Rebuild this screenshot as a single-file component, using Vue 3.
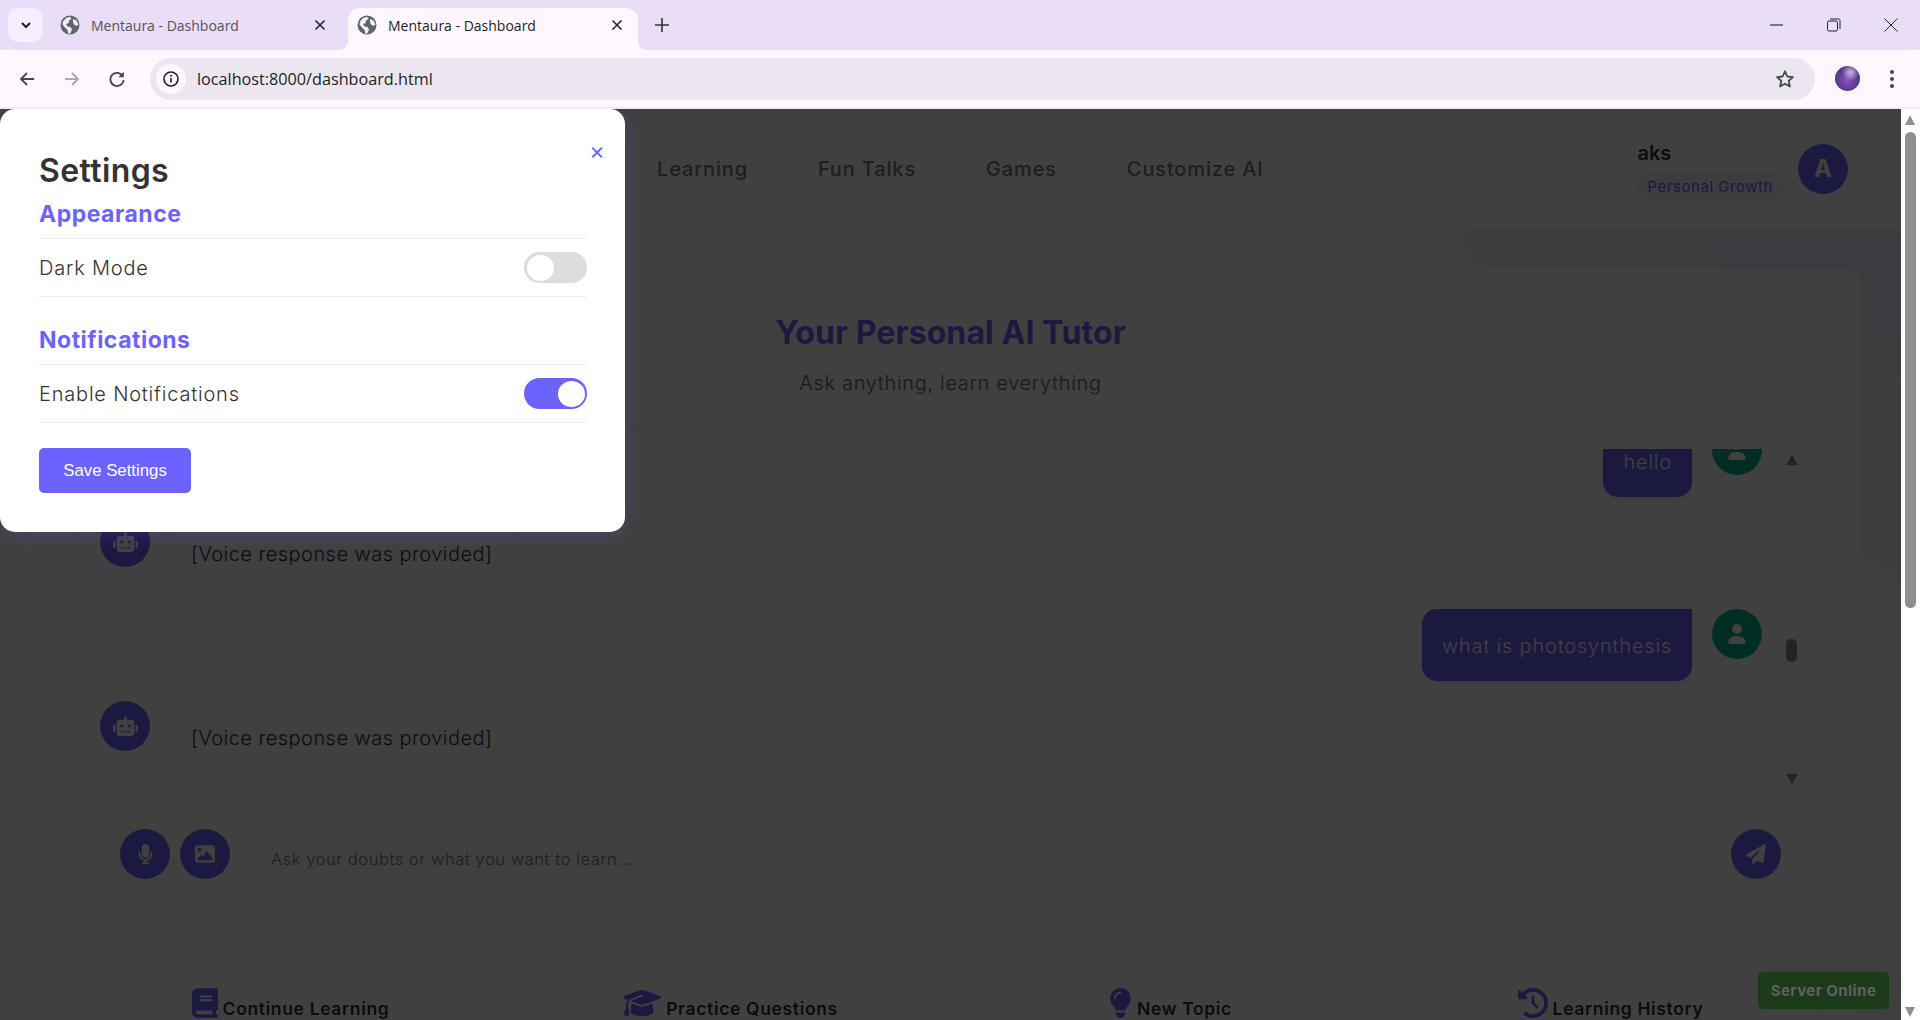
<template>
  <div class="window">
    <div class="tabstrip">
      <button class="tab-menu">
        <svg width="12" height="12" viewBox="0 0 12 12"><path d="M2 4l4 4 4-4" fill="none" stroke="#1f1f1f" stroke-width="2" /></svg>
      </button>
      <div v-for="(tab, i) in tabs" :key="i" class="tab" :class="{ active: tab.active }">
        <svg class="globe" width="20" height="20" viewBox="0 0 20 20">
          <circle cx="10" cy="10" r="9.5" fill="#60646b" />
          <path d="M3 6.500l3-3.500 4-1.200 1.500 2-2.500 2-.5 2.500-2.500.7 1.500 2.500 3 .5 1.500 2.500-1.500 3.500-2 1-1-4-2.500-2.500-2.500-3zM13 4l3.500 1.500 2 4-2 1.500-2.500-1.500-1-2.500z" fill="#f4eefa" />
        </svg>
        <span class="tab-title">Mentaura - Dashboard</span>
        <svg class="tab-close" width="12" height="12" viewBox="0 0 12 12"><path d="M1.500 1.500l9 9M10.500 1.500l-9 9" fill="none" stroke="#2b2b30" stroke-width="1.700" /></svg>
      </div>
      <svg class="new-tab" width="14" height="14" viewBox="0 0 14 14"><path d="M7 0v14M0 7h14" stroke="#333" stroke-width="1.600" /></svg>
      <div class="win-controls">
        <svg width="14" height="14" viewBox="0 0 14 14"><path d="M0 7h13" stroke="#111" stroke-width="1" /></svg>
        <svg width="14" height="14" viewBox="0 0 14 14"><rect x=".5" y="3" width="10" height="10" rx="1.500" fill="none" stroke="#222" /><path d="M3 1h8.500a1.500 1.500 0 0 1 1.500 1.500V11" fill="none" stroke="#222" /></svg>
        <svg width="14" height="14" viewBox="0 0 14 14"><path d="M.5.500l13 13M13.500.500l-13 13" stroke="#222" stroke-width="1" /></svg>
      </div>
    </div>

    <div class="toolbar">
      <svg class="tool" width="18" height="18" viewBox="0 0 18 18"><path d="M16 9H3M9 3L3 9l6 6" fill="none" stroke="#45454b" stroke-width="1.800" /></svg>
      <svg class="tool" width="18" height="18" viewBox="0 0 18 18"><path d="M2 9h13M9 3l6 6-6 6" fill="none" stroke="#aaa6ad" stroke-width="1.800" /></svg>
      <svg class="tool" width="18" height="18" viewBox="0 0 18 18"><path d="M14.800 6.200A6.600 6.600 0 1 0 15.600 10" fill="none" stroke="#45454b" stroke-width="1.800" /><path d="M15.800 1.800v5.400h-5.400z" fill="#45454b" /></svg>
      <div class="omnibox">
        <span class="site-info">
          <svg width="16" height="16" viewBox="0 0 16 16"><circle cx="8" cy="8" r="7" fill="none" stroke="#1f1f1f" stroke-width="1.600" /><path d="M8 7v4.500" stroke="#1f1f1f" stroke-width="1.600" /><circle cx="8" cy="4.800" r="1" fill="#1f1f1f" /></svg>
        </span>
        <span class="url">localhost:8000/dashboard.html</span>
        <svg class="star" width="20" height="20" viewBox="0 0 20 20"><path d="M10 2.300l2.300 5.200 5.600.6-4.200 3.800 1.200 5.600L10 14.700l-4.900 2.800 1.200-5.600L2.100 8.100l5.600-.6z" fill="none" stroke="#45454b" stroke-width="1.800" stroke-linejoin="round" /></svg>
      </div>
      <span class="profile"></span>
      <span class="kebab"><i></i><i></i><i></i></span>
    </div>

    <div class="viewport">
      <div class="page">
        <nav class="navbar">
          <a v-for="link in links" :key="link">{{ link }}</a>
          <div class="account">
            <div class="account-text">
              <strong>aks</strong>
              <span class="badge">Personal Growth</span>
            </div>
            <span class="account-avatar">A</span>
          </div>
        </nav>

        <main class="card">
          <h1>Your Personal AI Tutor</h1>
          <p class="sub">Ask anything, learn everything</p>

          <section class="chat">
            <div class="messages">
              <div class="list">
                <div v-for="(m, i) in messages" :key="i" class="msg" :class="m.from">
                  <span class="avatar">
                    <svg v-if="m.from === 'bot'" width="25" height="20" viewBox="0 0 640 512"><path :d="icons.robot" /></svg>
                    <svg v-else width="18" height="20" viewBox="0 0 448 512"><path :d="icons.user" /></svg>
                  </span>
                  <div class="bubble">{{ m.text }}</div>
                </div>
              </div>
              <div class="mini-scroll">
                <span class="arrow up"></span>
                <span class="thumb"></span>
                <span class="arrow down"></span>
              </div>
            </div>

            <div class="composer">
              <button class="round">
                <svg width="15" height="20" viewBox="0 0 384 512"><path :d="icons.mic" /></svg>
              </button>
              <button class="round">
                <svg width="20" height="20" viewBox="0 0 512 512"><path :d="icons.image" /></svg>
              </button>
              <input class="ask" placeholder="Ask your doubts or what you want to learn..." />
              <button class="round">
                <svg width="20" height="20" viewBox="0 0 512 512"><path :d="icons.send" /></svg>
              </button>
            </div>
          </section>

          <section class="actions">
            <div v-for="a in actions" :key="a.label" class="action">
              <svg :width="a.w" height="30" :viewBox="a.box"><path :d="a.d" /></svg>
              <span>{{ a.label }}</span>
            </div>
          </section>
        </main>

        <div class="overlay"></div>

        <div class="server">Server Online</div>

        <div class="modal">
          <span class="close">×</span>
          <h2>Settings</h2>
          <h3>Appearance</h3>
          <div class="row">
            <span>Dark Mode</span>
            <span class="toggle"><i></i></span>
          </div>
          <h3 class="second">Notifications</h3>
          <div class="row">
            <span>Enable Notifications</span>
            <span class="toggle on"><i></i></span>
          </div>
          <button class="save">Save Settings</button>
        </div>
      </div>

      <div class="page-scroll">
        <span class="arrow up"></span>
        <span class="thumb"></span>
        <span class="arrow down"></span>
      </div>
    </div>
  </div>
</template>

<script setup>
const tabs = [{ active: false }, { active: true }]
const links = ['Learning', 'Fun Talks', 'Games', 'Customize AI']

const icons = {
  robot: 'M320 0c17.7 0 32 14.3 32 32V96H472c39.8 0 72 32.2 72 72V440c0 39.8-32.2 72-72 72H168c-39.8 0-72-32.2-72-72V168c0-39.8 32.2-72 72-72H288V32c0-17.7 14.3-32 32-32zM208 384c-8.8 0-16 7.2-16 16s7.2 16 16 16h32c8.8 0 16-7.2 16-16s-7.2-16-16-16H208zm96 0c-8.8 0-16 7.2-16 16s7.2 16 16 16h32c8.8 0 16-7.2 16-16s-7.2-16-16-16H304zm96 0c-8.8 0-16 7.2-16 16s7.2 16 16 16h32c8.8 0 16-7.2 16-16s-7.2-16-16-16H400zM264 256a40 40 0 1 0 -80 0 40 40 0 1 0 80 0zm152 40a40 40 0 1 0 0-80 40 40 0 1 0 0 80zM48 224H64V416H48c-26.5 0-48-21.5-48-48V272c0-26.5 21.5-48 48-48zm544 0c26.5 0 48 21.5 48 48v96c0 26.5-21.5 48-48 48H576V224h16z',
  user: 'M224 256A128 128 0 1 0 224 0a128 128 0 1 0 0 256zm-45.7 48C79.8 304 0 383.8 0 482.3C0 498.7 13.3 512 29.7 512H418.3c16.4 0 29.7-13.3 29.7-29.7C448 383.8 368.2 304 269.7 304H178.3z',
  mic: 'M192 0C139 0 96 43 96 96V256c0 53 43 96 96 96s96-43 96-96V96c0-53-43-96-96-96zM64 216c0-13.3-10.7-24-24-24s-24 10.7-24 24v40c0 89.1 66.2 162.7 152 174.4V464H120c-13.3 0-24 10.7-24 24s10.7 24 24 24h72 72c13.3 0 24-10.7 24-24s-10.7-24-24-24H216V430.4c85.8-11.7 152-85.3 152-174.4V216c0-13.3-10.7-24-24-24s-24 10.7-24 24v40c0 70.7-57.3 128-128 128s-128-57.3-128-128V216z',
  image: 'M0 96C0 60.7 28.7 32 64 32H448c35.3 0 64 28.7 64 64V416c0 35.3-28.7 64-64 64H64c-35.3 0-64-28.7-64-64V96zM323.8 202.5c-4.5-6.6-11.9-10.5-19.8-10.5s-15.4 3.9-19.8 10.5l-87 127.6L170.7 297c-4.6-5.7-11.5-9-18.7-9s-14.2 3.3-18.7 9l-64 80c-5.8 7.2-6.9 17.1-2.9 25.4s12.4 13.6 21.6 13.6h96 32H424c8.9 0 17.1-4.9 21.2-12.8s3.6-17.4-1.4-24.7l-120-176zM112 192a48 48 0 1 0 0-96 48 48 0 1 0 0 96z',
  send: 'M498.1 5.6c10.1 7 15.4 19.1 13.5 31.2l-64 416c-1.5 9.7-7.4 18.2-16 23s-18.9 5.4-28 1.6L284 427.7l-68.5 74.1c-8.9 9.7-22.9 12.9-35.2 8.1S160 493.2 160 480V396.4c0-4 1.5-7.8 4.2-10.7L331.8 202.8c5.8-6.3 5.6-16-.4-22s-15.7-6.4-22-.7L106 360.8 17.7 316.6C7.1 311.3 .3 300.7 0 288.9s5.9-22.8 16.1-28.7l448-256c10.7-6.1 23.9-5.5 34 1.4z'
}

const messages = [
  { from: 'me', text: 'hello' },
  { from: 'bot', text: '[Voice response was provided]' },
  { from: 'me', text: 'what is photosynthesis' },
  { from: 'bot', text: '[Voice response was provided]' }
]

const actions = [
  {
    label: 'Continue Learning',
    w: 26,
    box: '0 0 448 512',
    d: 'M96 0C43 0 0 43 0 96V416c0 53 43 96 96 96H384h32c17.7 0 32-14.3 32-32s-14.3-32-32-32V384c17.7 0 32-14.3 32-32V32c0-17.7-14.3-32-32-32H384 96zm0 384H352v64H96c-17.7 0-32-14.3-32-32s14.3-32 32-32zm32-240c0-8.8 7.2-16 16-16H336c8.8 0 16 7.2 16 16s-7.2 16-16 16H144c-8.8 0-16-7.2-16-16zm16 48H336c8.8 0 16 7.2 16 16s-7.2 16-16 16H144c-8.8 0-16-7.2-16-16s7.2-16 16-16z'
  },
  {
    label: 'Practice Questions',
    w: 38,
    box: '0 0 640 512',
    d: 'M320 32c-8.1 0-16.1 1.4-23.7 4.1L15.8 137.4C6.3 140.9 0 149.9 0 160s6.3 19.1 15.8 22.6l57.9 20.9C57.3 229.3 48 259.8 48 291.9v28.1c0 28.4-10.8 57.7-22.3 80.8c-6.5 13-13.9 25.8-22.5 37.6C0 442.7-.9 448.3 .9 453.4s6 8.9 11.2 10.2l64 16c4.2 1.1 8.7 .3 12.4-2s6.3-6.1 7.1-10.4c8.6-42.8 4.3-81.2-2.1-108.7C90.3 344.3 86 329.8 80 316.5V291.9c0-30.2 10.2-58.7 27.9-81.5c12.9-15.5 29.6-28 49.2-35.7l157-61.7c8.2-3.2 17.5 .8 20.7 9s-.8 17.5-9 20.7l-157 61.7c-12.4 4.9-23.3 12.4-32.2 21.6l159.6 57.6c7.6 2.7 15.6 4.1 23.7 4.1s16.1-1.4 23.7-4.1L624.2 182.6c9.5-3.4 15.8-12.5 15.8-22.6s-6.3-19.1-15.8-22.6L343.7 36.1C336.1 33.4 328.1 32 320 32zM128 408c0 35.3 86 72 192 72s192-36.7 192-72L496.7 262.6 354.5 314c-11.1 4-22.8 6-34.5 6s-23.5-2-34.5-6L143.3 262.6 128 408z'
  },
  {
    label: 'New Topic',
    w: 23,
    box: '0 0 384 512',
    d: 'M272 384c9.6-31.9 29.5-59.1 49.2-86.2l0 0c5.2-7.1 10.4-14.2 15.4-21.4c19.8-28.5 31.4-63 31.4-100.3C368 78.8 289.2 0 192 0S16 78.8 16 176c0 37.3 11.6 71.9 31.4 100.3c5 7.2 10.2 14.3 15.4 21.4l0 0c19.8 27.1 39.7 54.4 49.2 86.2H272zM192 512c44.2 0 80-35.8 80-80V416H112v16c0 44.2 35.8 80 80 80zM112 176c0 8.8-7.2 16-16 16s-16-7.2-16-16c0-61.9 50.1-112 112-112c8.8 0 16 7.2 16 16s-7.2 16-16 16c-44.2 0-80 35.8-80 80z'
  },
  {
    label: 'Learning History',
    w: 30,
    box: '0 0 512 512',
    d: 'M75 75L41 41C25.9 25.9 0 36.6 0 57.9V168c0 13.3 10.7 24 24 24H134.1c21.4 0 32.1-25.9 17-41l-30.8-30.8C155 85.5 203 64 256 64c106 0 192 86 192 192s-86 192-192 192c-40.8 0-78.6-12.7-109.7-34.4c-14.5-10.1-34.4-6.6-44.6 7.9s-6.6 34.4 7.9 44.6C151.2 495 201.7 512 256 512c141.4 0 256-114.6 256-256S397.4 0 256 0C185.3 0 121.3 28.7 75 75zm181 53c-13.3 0-24 10.7-24 24V256c0 6.4 2.5 12.5 7 17l72 72c9.4 9.4 24.6 9.4 33.9 0s9.4-24.6 0-33.9l-65-65V152c0-13.3-10.7-24-24-24z'
  }
]
</script>

<style>
html,
body {
  margin: 0;
  overflow: hidden;
}
</style>

<style scoped>
.window {
  width: 1920px;
  height: 1020px;
  display: flex;
  flex-direction: column;
  overflow: hidden;
  font-family: Inter, "Open Sans", sans-serif;
  background: #fff;
}

/* browser chrome */
.tabstrip {
  height: 50px;
  flex: none;
  display: flex;
  align-items: flex-end;
  background: #e9ddf7;
  font-family: "Open Sans", sans-serif;
}
.tab-menu {
  width: 35px;
  height: 34px;
  margin: 0 5px 8px 8px;
  padding: 0;
  border: 0;
  border-radius: 10px;
  background: #f6eefc;
  display: flex;
  align-items: center;
  justify-content: center;
}
.tab {
  width: 299px;
  height: 42px;
  flex: none;
  box-sizing: border-box;
  padding: 0 21px 8px 12px;
  display: flex;
  align-items: center;
  border-radius: 12px 12px 0 0;
  font-size: 14px;
  color: #55525c;
}
.tab.active {
  position: relative;
  width: 290px;
  background: #fef7ff;
  color: #1f1f1f;
  margin-left: 1px;
  padding: 0 15px 8px 9px;
}
.tab.active::before,
.tab.active::after {
  content: "";
  position: absolute;
  bottom: 0;
  width: 10px;
  height: 10px;
}
.tab.active::before {
  left: -10px;
  background: radial-gradient(circle at 0 0, transparent 10px, #fef7ff 10.5px);
}
.tab.active::after {
  right: -10px;
  background: radial-gradient(circle at 100% 0, transparent 10px, #fef7ff 10.5px);
}
.globe {
  flex: none;
}
.tab-title {
  flex: 1;
  margin-left: 11px;
  white-space: nowrap;
}
.tab-close {
  flex: none;
}
.new-tab {
  margin: 0 0 18px 17px;
}
.win-controls {
  margin-left: auto;
  display: flex;
  gap: 43px;
  padding: 0 22px 18px 0;
}
.toolbar {
  height: 59px;
  flex: none;
  box-sizing: border-box;
  display: flex;
  align-items: center;
  background: #fef7ff;
  border-bottom: 2px solid #f3e8fa;
  border-radius: 10px 10px 0 0;
  padding-left: 18px;
}
.tool {
  flex: none;
  margin-right: 27px;
}
.omnibox {
  margin-left: -3px;
  width: 1665px;
  height: 42px;
  flex: none;
  box-sizing: border-box;
  display: flex;
  align-items: center;
  padding: 0 20px 0 6px;
  border-radius: 21px;
  background: #ece6f0;
}
.site-info {
  width: 30px;
  height: 30px;
  border-radius: 50%;
  background: #fef7ff;
  display: flex;
  align-items: center;
  justify-content: center;
}
.url {
  margin-left: 11px;
  flex: 1;
  font-family: "Open Sans", sans-serif;
  font-size: 16.2px;
  color: #1f1f1f;
}
.profile {
  width: 25px;
  height: 25px;
  flex: none;
  margin-left: 20px;
  border-radius: 50%;
  background:
    radial-gradient(circle at 62% 25%, #cbb7de 0, transparent 35%),
    radial-gradient(circle at 50% 55%, #8a4fc0 0, #3b2a6c 100%);
}
.kebab {
  margin-left: 30px;
  display: flex;
  flex-direction: column;
  gap: 3px;
}
.kebab i {
  width: 4px;
  height: 4px;
  border-radius: 50%;
  background: #45404d;
}

.viewport {
  flex: 1;
  min-height: 0;
  display: flex;
}
.page {
  position: relative;
  flex: 1;
  min-width: 0;
  overflow: hidden;
  background: radial-gradient(circle at 100% 0, #ebe7fb 0, #f6f4fc 25%, #ffffff 50%);
}

/* app */
.navbar {
  height: 120px;
  box-sizing: border-box;
  display: flex;
  align-items: center;
  padding: 0 40px 0 657px;
  background: #fff;
}
.navbar a {
  margin-right: 70px;
  font-size: 20px;
  font-weight: 500;
  letter-spacing: 0.85px;
  color: #777;
}
.account {
  margin-left: auto;
  display: flex;
  align-items: center;
  gap: 15px;
  padding: 15px 13px 16px 18px;
  border-radius: 40px;
  box-shadow: 0 2px 10px rgba(0, 0, 0, 0.015);
}
.account-text {
  margin-top: 2px;
  display: flex;
  flex-direction: column;
  align-items: flex-start;
}
.account-text strong {
  font-size: 20px;
  font-weight: 600;
  line-height: 28px;
  color: #333;
}
.badge {
  margin-top: 5px;
  padding: 0 10px;
  height: 29px;
  line-height: 29px;
  border-radius: 15px;
  font-size: 15px;
  letter-spacing: 0.55px;
  color: #6c63ff;
  background: #f2f1ff;
}
.account-avatar {
  width: 50px;
  height: 50px;
  border-radius: 50%;
  background: #6c63ff;
  color: #fff;
  font-size: 24px;
  font-weight: 700;
  display: flex;
  align-items: center;
  justify-content: center;
}
.card {
  margin: 40px 40px 0;
  padding: 40px 40px 0;
  background: #fff;
  border-radius: 15px 15px 0 0;
}
h1 {
  margin: 0;
  font-size: 32px;
  line-height: 48px;
  font-weight: 700;
  letter-spacing: 0.1px;
  text-align: center;
  color: #6c63ff;
}
.sub {
  margin: 14px 0 34px;
  font-size: 20px;
  line-height: 24px;
  font-weight: 300;
  letter-spacing: 0.67px;
  text-align: center;
  color: #666;
}
.chat {
  padding: 20px 20px 19px;
  background: #fff;
  border-radius: 15px;
  box-shadow: 0 0 6px rgba(0, 0, 0, 0.05);
}
.messages {
  height: 341px;
  margin-bottom: 18px;
  display: flex;
  overflow: hidden;
}
.list {
  flex: 1;
  margin-top: -24px;
  padding-right: 24px;
  display: flex;
  flex-direction: column;
  gap: 20px;
}
.msg {
  display: flex;
  gap: 20px;
  align-items: flex-start;
}
.msg.me {
  flex-direction: row-reverse;
}
.avatar {
  width: 50px;
  height: 50px;
  flex: none;
  border-radius: 50%;
  background: #6c63ff;
  display: flex;
  align-items: center;
  justify-content: center;
}
.avatar svg {
  fill: #fff;
}
.msg.me .avatar {
  background: #00b894;
}
.bubble {
  height: 72px;
  box-sizing: border-box;
  padding: 0 21px;
  line-height: 74px;
  font-size: 20px;
  font-weight: 300;
  letter-spacing: 0.45px;
  color: #333;
  border-radius: 15px;
  background: #fff;
  box-shadow: 0 2px 5px rgba(0, 0, 0, 0.08);
}
.msg.me .bubble {
  padding: 0 20px;
  background: #6c63ff;
  color: #fff;
  letter-spacing: 0.8px;
  border-top-right-radius: 0;
}
.mini-scroll {
  width: 12px;
  margin-right: 3px;
}
.arrow {
  display: block;
  width: 0;
  height: 0;
  border-left: 6px solid transparent;
  border-right: 6px solid transparent;
}
.arrow.up {
  border-bottom: 10px solid #8f8f8f;
}
.arrow.down {
  border-top: 10px solid #8f8f8f;
}
.mini-scroll .arrow.up {
  margin-top: 6px;
}
.mini-scroll .thumb {
  display: block;
  margin: 174px 1px 0 0;
  height: 23px;
  border-radius: 5px;
  background: #8f8f8f;
}
.mini-scroll .arrow.down {
  margin-top: 112px;
}
.composer {
  height: 101px;
  box-sizing: border-box;
  padding: 20px 19px 20px 19px;
  display: flex;
  align-items: flex-start;
  gap: 10px;
  background: #fff;
  border: 1px solid #fbfbfb;
  border-radius: 15px;
  box-shadow: 0 1px 6px rgba(0, 0, 0, 0.05);
}
.round {
  width: 50px;
  height: 50px;
  flex: none;
  padding: 0;
  border: 0;
  border-radius: 50%;
  background: #6c63ff;
  display: flex;
  align-items: center;
  justify-content: center;
}
.round svg {
  fill: #fff;
}
.ask {
  flex: 1;
  min-width: 0;
  height: 58px;
  margin: 0 9px 0 11px;
  box-sizing: border-box;
  padding: 2px 20px 0;
  border: 0;
  outline: 0;
  border-radius: 10px;
  background: #fafafa;
  font-family: inherit;
  font-size: 16.5px;
  font-weight: 300;
  letter-spacing: 0.55px;
}
.actions {
  margin-top: 40px;
  display: grid;
  grid-template-columns: repeat(4, 1fr);
  gap: 19px;
}
.action {
  height: 120px;
  box-sizing: border-box;
  padding-top: 20px;
  display: flex;
  align-items: flex-start;
  justify-content: center;
  gap: 5px;
  background: #fff;
  border-radius: 15px;
  box-shadow: 0 0 6px rgba(0, 0, 0, 0.05);
}
.action svg {
  fill: #6c63ff;
  flex: none;
}
.action span {
  margin-top: 10px;
  font-size: 17.5px;
  font-weight: 600;
  letter-spacing: 0.65px;
  color: #333;
}
.overlay {
  position: absolute;
  inset: 0;
  background: rgba(0, 0, 0, 0.75);
}
/* badge sits above the dimmer, its colours are the dimmed ones */
.server {
  position: absolute;
  right: 12px;
  bottom: 11px;
  width: 131px;
  height: 37px;
  line-height: 37px;
  text-align: center;
  border-radius: 5px;
  background: #1a3a1a;
  color: #606060;
  font-size: 15px;
  font-weight: 700;
  letter-spacing: 0.45px;
}

/* settings modal */
.modal {
  position: absolute;
  left: 0;
  top: 0;
  width: 625px;
  box-sizing: border-box;
  padding: 40px 38px 39px 39px;
  background: #fff;
  border-radius: 15px;
  box-shadow: 0 4px 20px rgba(108, 99, 255, 0.2);
}
.close {
  position: absolute;
  right: 20px;
  top: 27px;
  font-size: 24px;
  line-height: 30px;
  color: #6c63ff;
}
h2 {
  margin: 0 0 6px;
  font-size: 32px;
  line-height: 44px;
  font-weight: 600;
  letter-spacing: 0.4px;
  color: #333;
}
h3 {
  margin: 0;
  padding-bottom: 9px;
  border-bottom: 1px solid #eee;
  font-size: 23px;
  line-height: 30px;
  font-weight: 700;
  letter-spacing: 0.5px;
  color: #6c63ff;
}
h3.second {
  margin-top: 28px;
}
.row {
  height: 58px;
  box-sizing: border-box;
  display: flex;
  align-items: center;
  justify-content: space-between;
  border-bottom: 1px solid #eee;
  font-size: 20px;
  font-weight: 300;
  letter-spacing: 0.8px;
  color: #333;
}
.toggle {
  width: 63px;
  height: 31px;
  box-sizing: border-box;
  padding: 2.5px;
  display: flex;
  justify-content: flex-start;
  border-radius: 16px;
  background: #ddd;
}
.toggle i {
  width: 27px;
  height: 26px;
  border-radius: 50%;
  background: #fff;
}
.toggle.on {
  justify-content: flex-end;
  background: #6c63ff;
}
.save {
  display: block;
  width: 152px;
  height: 45px;
  margin-top: 25px;
  padding: 0;
  border: 0;
  border-radius: 5px;
  background: #6c63ff;
  color: #fff;
  font-family: "Liberation Sans", sans-serif;
  font-size: 16.8px;
}

/* window scrollbar */
.page-scroll {
  width: 19px;
  flex: none;
  box-sizing: border-box;
  padding: 6px 4px 0;
  background: #fff;
}
.page-scroll .arrow {
  border-left-width: 5.5px;
  border-right-width: 5.5px;
}
.page-scroll .thumb {
  display: block;
  margin-top: 7px;
  height: 476px;
  border-radius: 6px;
  background: #8f8f8f;
}
.page-scroll .arrow.down {
  margin-top: 399px;
}
</style>
